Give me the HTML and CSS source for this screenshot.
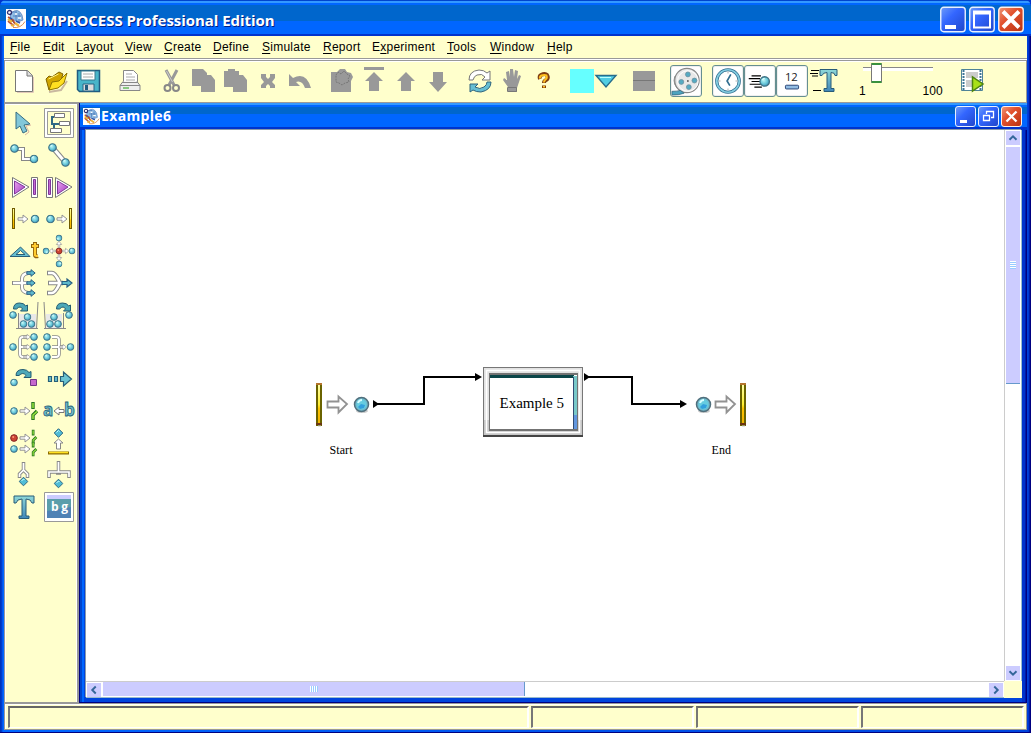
FILE: index.html
```html
<!DOCTYPE html>
<html lang="en">
<head>
<meta charset="utf-8">
<title>SIMPROCESS Professional Edition</title>
<link rel="stylesheet" href="styles.css">
</head>
<body>
<svg class="defs" width="0" height="0" aria-hidden="true">
  <defs>
    <radialGradient id="gBall" cx=".4" cy=".38" r=".65"><stop offset="0" stop-color="#b8f4f4"/><stop offset=".6" stop-color="#66c6d8"/><stop offset="1" stop-color="#3f8fb8"/></radialGradient>
    <linearGradient id="gTeal" x1="0" y1="0" x2="0" y2="1"><stop offset="0" stop-color="#8ed8d8"/><stop offset="1" stop-color="#3f86b8"/></linearGradient>
    <linearGradient id="gGold" x1="0" y1="0" x2="0" y2="1"><stop offset="0" stop-color="#ffffb0"/><stop offset=".5" stop-color="#ffee33"/><stop offset=".6" stop-color="#ffc400"/><stop offset="1" stop-color="#eeb000"/></linearGradient>
    <linearGradient id="gPurple" x1="0" y1="0" x2="1" y2="1"><stop offset="0" stop-color="#e9a0f0"/><stop offset="1" stop-color="#a23cc0"/></linearGradient>
    <linearGradient id="gBlueBtn" x1="0" y1="0" x2="1" y2="1"><stop offset="0" stop-color="#6f9cf8"/><stop offset=".4" stop-color="#3366ff"/><stop offset="1" stop-color="#1f45c8"/></linearGradient>
    <linearGradient id="gRedBtn" x1="0" y1="0" x2="1" y2="1"><stop offset="0" stop-color="#f09878"/><stop offset=".4" stop-color="#e2522e"/><stop offset="1" stop-color="#b83010"/></linearGradient>
    <symbol id="ball" viewBox="0 0 10 10"><circle cx="5" cy="5" r="4.200" fill="url(#gBall)" stroke="#3f7486" stroke-width="1.200"/><path d="M3 4q0-1.500 2-1.500" fill="none" stroke="#e0ffff"/></symbol>
    <symbol id="bigball" viewBox="0 0 17 17"><circle cx="8.500" cy="8.500" r="7" fill="#6fb9cc" stroke="#506f7c" stroke-width="1.500"/><circle cx="8.500" cy="8.500" r="5" fill="#66cce0"/><path d="M8 8l4 1-1 3-4 1-2-2z" fill="#33a0dd"/><path d="M5 7q1-3 4-3" fill="none" stroke="#d8ffff" stroke-width="2"/></symbol>
    <symbol id="redball" viewBox="0 0 10 10"><circle cx="5" cy="5" r="4.200" fill="#cc4433" stroke="#802020" stroke-width="1.200"/><circle cx="4" cy="3.700" r="1.200" fill="#ff9977"/></symbol>
    <symbol id="arrow" viewBox="0 0 12 10"><path d="M1 3.800h5V1l5 4-5 4V6.200H1z" fill="#fff" stroke="#929292" stroke-width="1"/></symbol>
    <symbol id="bluearrow" viewBox="0 0 12 10"><path d="M1 3.500h5V1l5 4-5 4V6.500H1z" fill="#5eb9cc" stroke="#285f82" stroke-width="1.200"/></symbol>
    <symbol id="diamond" viewBox="0 0 10 10"><path d="M5 .7 9.300 5 5 9.300.7 5z" fill="#50bdd7" stroke="#2c6580"/><path d="M3 4.500 5 2.500l1 1" stroke="#c8ffff" fill="none"/></symbol>
    <symbol id="gate" viewBox="0 0 8 20"><path d="M2 1v7M2 19v-5l4-4" stroke="#267520" stroke-width="3.400" fill="none"/><path d="M2 2v5M2 18v-4l4-3.500" stroke="#9ce83c" stroke-width="1.400" fill="none"/></symbol>
    <symbol id="logo" viewBox="0 0 20 20"><path d="M0 0h20v20H0z" fill="#fff"/><path d="M5 4q7-6 11 2l1 5-5 2-8-4z" fill="#8fbde6" stroke="#4d77b5" stroke-width=".7"/><circle cx="3.500" cy="3.500" r="2" fill="none" stroke="#303070" stroke-width="1.300"/><path d="M6 3h5M7 7h8M10 3v8M13 4v8" stroke="#4d77b5" stroke-width=".8"/><path d="M9 5h2M12 9h3" stroke="#fff" stroke-width="1.500"/><path d="M2 8l5 3 2 4M2 12l6 5" stroke="#bb4d33" stroke-width="1.700"/><path d="M2 10l4 3M9 14l4 3M5 16l3 1" stroke="#eeb43c" stroke-width="2.200"/><path d="M4 9l2 1M10 12l4 2" stroke="#3355a5" stroke-width="1.500"/><path d="M7 18.500q8 1 12-6" stroke="#dd9055" fill="none"/></symbol>
    <symbol id="wmin" viewBox="0 0 26 26"><rect x=".75" y=".75" width="24.500" height="24.500" rx="3" fill="url(#gBlueBtn)" stroke="#e8f0ff" stroke-width="1.400"/><path d="M5 18.500h11v4H5z" fill="#fff"/></symbol>
    <symbol id="wmax" viewBox="0 0 26 26"><rect x=".75" y=".75" width="24.500" height="24.500" rx="3" fill="url(#gBlueBtn)" stroke="#e8f0ff" stroke-width="1.400"/><path d="M4 4h18v18H4zm2 4v12h14V8z" fill="#fff" fill-rule="evenodd"/></symbol>
    <symbol id="wclose" viewBox="0 0 26 26"><rect x=".75" y=".75" width="24.500" height="24.500" rx="3" fill="url(#gRedBtn)" stroke="#fff0e8" stroke-width="1.400"/><path d="M5 5l16 16M21 5 5 21" stroke="#fff" stroke-width="4"/></symbol>
    <symbol id="smin" viewBox="0 0 21 21"><rect x=".5" y=".5" width="20" height="20" rx="2.500" fill="url(#gBlueBtn)" stroke="#e8f0ff"/><path d="M5 14h7v3H5z" fill="#fff"/></symbol>
    <symbol id="srest" viewBox="0 0 21 21"><rect x=".5" y=".5" width="20" height="20" rx="2.500" fill="url(#gBlueBtn)" stroke="#e8f0ff"/><path d="M8.500 8V5.500h7v6H13M8 5.500h8M5.500 9.500h6v5h-6zM5 9.500h7" fill="none" stroke="#fff" stroke-width="1.300"/></symbol>
    <symbol id="sclose" viewBox="0 0 21 21"><rect x=".5" y=".5" width="20" height="20" rx="2.500" fill="url(#gRedBtn)" stroke="#fff0e8"/><path d="M5.500 5.500l10 10M15.500 5.500l-10 10" stroke="#fff" stroke-width="2.300"/></symbol>
  </defs>
</svg>

<div class="app">
  <header class="titlebar">
    <svg class="logo"><use href="#logo"/></svg>
    <h1 class="title">SIMPROCESS Professional Edition</h1>
    <div class="winbtns"><svg><use href="#wmin"/></svg><svg><use href="#wmax"/></svg><svg><use href="#wclose"/></svg></div>
  </header>

  <nav class="menu">
    <span><u>F</u>ile</span><span><u>E</u>dit</span><span><u>L</u>ayout</span><span><u>V</u>iew</span><span><u>C</u>reate</span><span><u>D</u>efine</span><span><u>S</u>imulate</span><span><u>R</u>eport</span><span>E<u>x</u>periment</span><span><u>T</u>ools</span><span><u>W</u>indow</span><span><u>H</u>elp</span>
  </nav>

  <div class="toolbar">
    <div class="group">
      <svg viewBox="0 0 32 32"><path d="M7.500 5.500h12l5 5v16h-17z" fill="#fff" stroke="#777"/><path d="M19 5.500v5.500h5.500" fill="#ddd" stroke="#777"/><path d="M9 27.500h16.500V12" fill="none" stroke="#e2c8b8"/></svg>
      <svg viewBox="0 0 32 32"><path d="M9 27l12-2 6-9" stroke="#c9b8a0" stroke-width="2" fill="none"/><path d="M6 14l3-3 3 1 7-5 4 2-4 12-10 4z" fill="#d0a400" stroke="#806400"/><path d="M9 25l3-8 7-1 8-8-3 10-6 5z" fill="#ffdf20" stroke="#907400"/><path d="M8.500 14l10-5" stroke="#fff17c"/></svg>
      <svg viewBox="0 0 32 32"><path d="M5.500 5.500h22v21h-20l-2-2z" fill="#48b5c9" stroke="#205b80" stroke-width="1.500"/><path d="M9 6h14v9H9z" fill="#fff" stroke="#397b8f"/><path d="M11 9h10M11 12h10" stroke="#aaa"/><path d="M11 19h11v7H11z" fill="#ddd" stroke="#286484"/><path d="M13 20h3v5h-3z" fill="#225c80"/></svg>
    </div>
    <div class="group">
      <svg viewBox="0 0 32 32"><path d="M9.500 17V5.500h10l4 4V17" fill="#fff" stroke="#888"/><path d="M12 9h6M12 12h9M12 15h9" stroke="#aaa"/><path d="M9 16.500l-3 4v5h20v-5l-3-4" fill="#eee" stroke="#888"/><path d="M8 17.500h16M6 20.500h20" stroke="#888"/><path d="M9 23h6" stroke="#66bb5c" stroke-width="1.500"/></svg>
    </div>
    <div class="group gray">
      <svg viewBox="0 0 32 32"><path d="M10 5l8 15M21 5l-8 15" stroke="#999" stroke-width="3"/><circle cx="11.500" cy="23" r="3" fill="none" stroke="#888" stroke-width="2"/><circle cx="20" cy="23" r="3" fill="none" stroke="#888" stroke-width="2"/><path d="M10.500 6l6 11" stroke="#ccc"/></svg>
      <svg viewBox="0 0 32 32"><path d="M4 4h11l4 4v2h4l4 5v12H13v-6H4z"/></svg>
      <svg viewBox="0 0 32 32"><path d="M4 6h4V4h7v2h4v4h4l4 5v12H13v-5H4z"/></svg>
      <svg viewBox="0 0 32 32"><path d="M9 9h5v3l2 2 2-2V9h5v4l-3 4 3 3v3h-5v-2l-2-2-2 2v2H9v-3l3-3-3-4z"/></svg>
      <svg viewBox="0 0 32 32"><path d="M5 9l4 4q13-7 18 10h-6q-3-8-9-6l4 4H5z"/></svg>
    </div>
    <div class="group gray">
      <svg viewBox="0 0 32 32"><path d="M5 7h6l3-3h5l2 3 4 1 2 4-2 4v11H5z"/><path d="M10 10l2-3 3 2 3-3 3 3 3 2-2 3 1 3-4 1-3 2-3-2-3-1z" fill="none" stroke="#777" stroke-dasharray="2 1"/></svg>
      <svg viewBox="0 0 32 32"><path d="M6 2h20v3H6zM16 7l9 9h-4v10H11V16H7z"/></svg>
      <svg viewBox="0 0 32 32"><path d="M16 7l9 9h-4v10H11V16H7z"/></svg>
      <svg viewBox="0 0 32 32"><path d="M11 7h10v10h4l-9 10-9-10h4z"/></svg>
    </div>
    <div class="group">
      <svg viewBox="0 0 32 32"><path d="M5 15q0-9 10-10 5 0 8 3l3-2v9h-8l3-3q-3-4-8-2-3 1-4 5z" fill="#fff" stroke="#777"/><path d="M27 17q0 8-10 10-5 0-8-2l-3 2v-8h8l-3 3q5 3 9 0 3-2 3-5z" fill="#65bed3" stroke="#30657d"/></svg>
      <svg viewBox="0 0 32 32"><g class="gray"><path d="M12 22l-5-7 1-2 3 2-1-8 3-1 1 6V4h3l1 8 1-7 3 1-1 8 2-4 2 1-4 12v4h-9z"/></g><path d="M11.500 22.500h9v4h-9z" fill="none" stroke="#777"/></svg>
      <svg viewBox="0 0 32 32"><path d="M12 14q-1-3 1-4 4-2 6 0 2 3-1 5-2 1-2 3m0 2.500V23" fill="none" stroke="#7e3d12" stroke-width="4"/><path d="M12 13.500q-.5-2 1.500-3 3-1 5 0 1 2.500-1 4-1.500 1-1.500 3m0 3.500v1.500" fill="none" stroke="#ffc020" stroke-width="2"/></svg>
    </div>
    <div class="group picker"><i class="swatch"></i><svg viewBox="0 0 24 32"><path d="M2 10.500h20L12 22z" fill="#50cde3" stroke="#286c8b" stroke-width="1.400"/><path d="M6 12.500h11" stroke="#baffff"/></svg></div>
    <div class="group"><svg viewBox="0 0 32 32"><path d="M5 6h22v20H5z" fill="#999"/><path d="M5 15.500h22" stroke="#777"/></svg></div>
    <div class="group">
      <svg viewBox="0 0 32 32" class="framed"><circle cx="17" cy="15.500" r="13" fill="#e8e8e8" stroke="#888" stroke-width="1.300"/><circle cx="18" cy="16" r="11" fill="none" stroke="#fff"/><path d="M4 11Q1 20 10 27" fill="none" stroke="#888"/><path d="M1 27q6 0 9-1l4 3q-5 2-13 2z" fill="#4da4c0" stroke="#35677e" stroke-width=".8"/><g fill="#55aac2" stroke="#6a8c9c" stroke-width=".8"><circle cx="18" cy="9" r="2.600"/><circle cx="25" cy="15.500" r="2.600"/><circle cx="19" cy="22.500" r="2.600"/><circle cx="11" cy="17" r="2.600"/></g><circle cx="18" cy="16" r="1" fill="#555"/></svg>
    </div>
    <div class="group">
      <svg viewBox="0 0 32 32" class="framed"><circle cx="16" cy="16" r="12" fill="#fff" stroke="#316e90" stroke-width="3.400"/><circle cx="16" cy="16" r="12" fill="none" stroke="#83cce0" stroke-width="1.800"/><path d="M19 9l-4 7 3 5" fill="none" stroke="#316e90" stroke-width="1.800"/><path d="M16 6v2M16 24v2M6 16h2M24 16h2" stroke="#aaa"/></svg>
      <svg viewBox="0 0 32 32" class="framed"><path d="M7 10.500h10M4 13.500h12M7 16.500h9M5 19.500h12M10 22.500h8" stroke="#000" stroke-width="1.200"/><use href="#ball" x="15" y="10.500" width="12" height="12"/></svg>
      <svg viewBox="0 0 32 32" class="framed"><text x="8.500" y="16" class="twelve" textLength="13.500">12</text><rect x="9" y="20.500" width="14" height="4" rx="1" fill="#91bce3" stroke="#233f72"/></svg>
      <svg viewBox="0 0 32 32"><path d="M3 5.500h8M2 8.500h8M4 11h6M5 25.500h8" stroke="#000" stroke-width="1.200"/><path d="M12 4.500h17v6h-2q0-3-4-3v16h3v3H16v-3h3v-16q-4 0-5 3h-2z" fill="url(#gTeal)" stroke="#285c78"/></svg>
    </div>
    <div class="slider"><div class="track"><i class="thumb"></i></div><div class="labels"><span>1</span><span>100</span></div></div>
    <svg viewBox="0 0 32 32" class="run"><path d="M5.500 4.500h21v21h-21z" fill="#fff" stroke="#4f8398"/><path d="M7.500 5v20M24.500 5v20" stroke="#3f7795" stroke-width="2" stroke-dasharray="2 1"/><path d="M10 7h12v6H10zM10 15h12v7H10z" fill="#ccc"/><path d="M16.500 12v14l10.500-7z" fill="#a8e018" stroke="#4e8310" stroke-width="1.500"/></svg>
  </div>

  <main class="body">
    <aside class="palette">
      <svg viewBox="0 0 32 32"><path d="M8 5l14 12-6 1 3 6-4 2-3-7-4 3z" fill="#82c7d9" stroke="#356c82"/><path d="M23 18l-5 1 3 6-4 3" fill="none" stroke="#dbb5a0"/></svg>
      <svg viewBox="0 0 32 32"><path d="M1.500 1.500h29v29h-29z" fill="#fff" stroke="#999"/><path d="M4.500 4.500h23v23h-23z" fill="#ffffcc" stroke="#999"/><path d="M11 10H9v7h8M11 16v6" fill="none" stroke="#306884" stroke-width="2"/><g fill="#fff" stroke="#777"><path d="M11.500 6.500h10v4h-10zM16.500 14.500h10v4h-10zM7.500 21.500h11v4h-11z"/></g></svg>
      <svg viewBox="0 0 32 32"><path d="M6 10h9v10h12" fill="none" stroke="#888" stroke-width="4"/><path d="M6 10h9v10h12" fill="none" stroke="#fff" stroke-width="2"/><use href="#ball" x="2" y="5" width="9" height="9"/><use href="#ball" x="21.500" y="15.500" width="9" height="9"/></svg>
      <svg viewBox="0 0 32 32"><path d="M10 9l12 14" stroke="#888" stroke-width="5"/><path d="M10 9l12 14" stroke="#fff" stroke-width="3"/><use href="#ball" x="5" y="4" width="9" height="9"/><use href="#ball" x="18" y="19" width="9" height="9"/></svg>
      <svg viewBox="0 0 32 32"><path d="M4.500 6.500v20L21 16z" fill="#fff" stroke="#777"/><path d="M6.500 10v13L17 16z" fill="url(#gPurple)" stroke="#81359a"/><path d="M23.500 6.500h6v20h-6z" fill="#fff" stroke="#777"/><path d="M25.500 8.500h2v15h-2z" fill="#c36ad2" stroke="#81359a"/></svg>
      <svg viewBox="0 0 32 32"><path d="M3.500 6.500h6v20h-6z" fill="#fff" stroke="#777"/><path d="M5.500 8.500h2v15h-2z" fill="#c36ad2" stroke="#81359a"/><path d="M12.500 6.500v20L29 16z" fill="#fff" stroke="#777"/><path d="M14.500 10v13L25 16z" fill="url(#gPurple)" stroke="#81359a"/></svg>
      <svg viewBox="0 0 32 32"><rect x="4.500" y="5.500" width="2" height="20" fill="url(#gGold)" stroke="#705b00"/><use href="#arrow" x="9" y="11" width="12" height="10"/><use href="#ball" x="22.500" y="11.500" width="9" height="9"/></svg>
      <svg viewBox="0 0 32 32"><use href="#ball" x="3" y="11.500" width="9" height="9"/><use href="#arrow" x="13" y="11" width="12" height="10"/><rect x="26.500" y="5.500" width="2" height="20" fill="url(#gGold)" stroke="#705b00"/></svg>
      <svg viewBox="0 0 32 32"><path d="M2 21.500h20L12.500 12zm6-2h9l-4.500-4z" fill="#66bed0" stroke="#285f79" fill-rule="evenodd"/><path d="M27 7v13q0 2 3 1M23 11h8" fill="none" stroke="#91620c" stroke-width="4"/><path d="M27 8v12q0 1 3 1M24 11h6" fill="none" stroke="#ffcb30" stroke-width="2.200"/></svg>
      <svg viewBox="0 0 32 32"><g id="spoke"><use href="#arrow" x="18.500" y="11" width="8" height="10"/><use href="#ball" x="25.500" y="12.500" width="7" height="7"/></g><use href="#spoke" transform="rotate(90 16 16)"/><use href="#spoke" transform="rotate(180 16 16)"/><use href="#spoke" transform="rotate(270 16 16)"/><use href="#redball" x="12.500" y="12.500" width="7" height="7"/></svg>
      <svg viewBox="0 0 32 32"><path d="M4 16h16M22 6h-2q-6 1-6 6v8q0 5 6 6h2" fill="none" stroke="#888" stroke-width="4"/><path d="M5 16h15M22 6h-2q-6 1-6 6v8q0 5 6 6h2" fill="none" stroke="#fff" stroke-width="2.300"/><use href="#bluearrow" x="18" y="1.500" width="10" height="9"/><use href="#bluearrow" x="18" y="11.500" width="10" height="9"/><use href="#bluearrow" x="18" y="21.500" width="10" height="9"/></svg>
      <svg viewBox="0 0 32 32"><path d="M4 6h5q3 0 7 8v4q-4 8-7 8H4M5 16h15" fill="none" stroke="#888" stroke-width="4.500"/><path d="M5 6h4q3 0 7 8v4q-4 8-7 8H5M6 16h14" fill="none" stroke="#fff" stroke-width="2.700"/><use href="#bluearrow" x="18" y="10.500" width="12" height="11"/></svg>
      <svg viewBox="0 0 32 32"><use href="#ball" x="1" y="12" width="8" height="8"/><path d="M5.500 10q0-6 6-6 5 0 6 3l2-1v6h-7l2-2q-2-4-6 0z" fill="#4da8b8" stroke="#245c72"/><path d="M11 15h17v14H11z" fill="#e8e8e8"/><path d="M10.500 14v15.500h18L30 3M8 29.500h22" fill="none" stroke="#888"/><use href="#ball" x="15.500" y="14" width="8" height="8"/><use href="#ball" x="11.500" y="21" width="8" height="8"/><use href="#ball" x="19.500" y="21" width="8" height="8"/></svg>
      <svg viewBox="0 0 32 32"><use href="#ball" x="22" y="12" width="8" height="8"/><path d="M13.500 10q0-6 6-6 5 0 6 3l2-1v6h-7l2-2q-2-4-6 0z" fill="#4da8b8" stroke="#245c72"/><path d="M3 15h16v14H3z" fill="#e8e8e8"/><path d="M1 3l1.500 26.500h18V14M1 29.500h22" fill="none" stroke="#888"/><use href="#ball" x="7" y="14" width="8" height="8"/><use href="#ball" x="3" y="21" width="8" height="8"/><use href="#ball" x="11" y="21" width="8" height="8"/></svg>
      <svg viewBox="0 0 32 32"><path d="M20 6h-5q-3 0-3 3v14q0 3 3 3h5M11 16h9" fill="none" stroke="#888" stroke-width="3.500"/><path d="M20 6h-5q-3 0-3 3v14q0 3 3 3h5M11 16h9" fill="none" stroke="#fff" stroke-width="2"/><use href="#arrow" x="15" y="2" width="8" height="8"/><use href="#arrow" x="15" y="12" width="8" height="8"/><use href="#arrow" x="15" y="22" width="8" height="8"/><use href="#ball" x="1" y="12" width="8" height="8"/><use href="#ball" x="22" y="2" width="8" height="8"/><use href="#ball" x="22" y="12" width="8" height="8"/><use href="#ball" x="22" y="22" width="8" height="8"/></svg>
      <svg viewBox="0 0 32 32"><path d="M9 6h4q3 0 3 3v14q0 3-3 3H9M9 16h11" fill="none" stroke="#888" stroke-width="3.500"/><path d="M9 6h4q3 0 3 3v14q0 3-3 3H9M9 16h11" fill="none" stroke="#fff" stroke-width="2"/><use href="#arrow" x="16" y="12" width="8" height="8"/><use href="#ball" x="0" y="2" width="8" height="8"/><use href="#ball" x="0" y="12" width="8" height="8"/><use href="#ball" x="0" y="22" width="8" height="8"/><use href="#ball" x="23.500" y="12" width="8" height="8"/></svg>
      <svg viewBox="0 0 32 32"><use href="#ball" x="2" y="15.500" width="8" height="8"/><path d="M8 12.500q0-6 7-6 4 0 6 3l2-1v6h-7l2-2q-3-4-7 0z" fill="#4da8b8" stroke="#245c72"/><path d="M22.500 16.500h6v6h-6z" fill="#c667ce" stroke="#713786"/></svg>
      <svg viewBox="0 0 32 32"><path d="M5.500 13.500h3v5h-3zM11.500 13.500h3v5h-3zM17.500 13.500h3V9l8 7-8 7v-4.500h-3z" fill="#6bc4d2" stroke="#285f79" stroke-width="1.200"/></svg>
      <svg viewBox="0 0 32 32"><use href="#ball" x="2" y="12" width="8" height="8"/><use href="#arrow" x="11" y="11" width="12" height="10"/><use href="#gate" x="23" y="6" width="8" height="20"/></svg>
      <svg viewBox="0 0 32 32"><text x="0" y="21" class="letters">a</text><text x="21" y="21" class="letters">b</text><path d="M21 14.500h-5V12l-5 4 5 4v-2.500h5z" fill="#fff" stroke="#777"/></svg>
      <svg viewBox="0 0 32 32"><use href="#redball" x="2" y="7" width="8" height="8"/><use href="#ball" x="2" y="18" width="8" height="8"/><use href="#arrow" x="11" y="6" width="12" height="10"/><use href="#arrow" x="11" y="17" width="12" height="10"/><use href="#gate" x="23" y="2" width="7.500" height="16"/><use href="#gate" x="23" y="14" width="7.500" height="16"/></svg>
      <svg viewBox="0 0 32 32"><use href="#diamond" x="10.500" y="1" width="10" height="10"/><path d="M13.500 22v-6H11l4.500-4 4.500 4h-2.500v6z" fill="#fff" stroke="#888"/><path d="M5 26h21" stroke="#8b6a00" stroke-width="3"/><path d="M6 25.500h19" stroke="#ffe020" stroke-width="1.500"/></svg>
      <svg viewBox="0 0 32 32"><path d="M15.500 3v8l-4 4v4M15.500 11l4 4v4" fill="none" stroke="#888" stroke-width="3.500"/><path d="M15.500 4v7l-4 4v3M15.500 11l4 4v3" fill="none" stroke="#fff" stroke-width="1.700"/><use href="#diamond" x="10.500" y="17.500" width="10" height="10"/></svg>
      <svg viewBox="0 0 32 32"><path d="M15.500 2v10M6 19v-6h20v6M13 14h5" fill="none" stroke="#888" stroke-width="3.500"/><path d="M15.500 3v10M6 18v-5h20v5" fill="none" stroke="#fff" stroke-width="1.700"/><use href="#diamond" x="10.500" y="19.500" width="10" height="10"/></svg>
      <svg viewBox="0 0 32 32"><path d="M6 5h20v7h-2q-1-4-6-4v17h3v2.500H11V25h3V8q-5 0-6 4H6z" fill="url(#gTeal)" stroke="#285c78"/></svg>
      <svg viewBox="0 0 32 32"><path d="M1.500 1.500h29v29h-29z" fill="#fff" stroke="#999"/><path d="M4 4h24v4H4z" fill="#ccccff"/><path d="M4 8h24v19H4z" fill="#4f82b5"/><path d="M4 8h24v8L4 20z" fill="#5a9eab"/><text x="8" y="20" class="bg" textLength="17">bg</text></svg>
    </aside>

    <section class="doc">
      <div class="doctitle">
        <svg class="logo"><use href="#logo"/></svg>
        <h2>Example6</h2>
        <div class="winbtns small"><svg><use href="#smin"/></svg><svg><use href="#srest"/></svg><svg><use href="#sclose"/></svg></div>
      </div>
      <div class="view">
        <svg class="canvas" viewBox="86 130 918 551">
          <g fill="none" stroke="#000" stroke-width="2"><path d="M376 404h48v-27h53M586 377h46v27h50"/></g>
          <path d="M373 400v8l6-4zM475 373v8l7-4zM584 373v8l6-4zM680 400v8l7-4z"/>
          <g id="bar"><rect x="317" y="384" width="4" height="41" fill="url(#gGold)" stroke="#6a6300" stroke-width="2"/><path d="M316 383h6v2h-6z" fill="#b5742d"/><path d="M316 423h6v2h-6z" fill="#6b3511"/><path d="M318 426h3" stroke="#ccc"/></g>
          <use href="#bar" x="424"/>
          <g id="bigarrow"><path d="M327.500 401.500h11v-5l8.500 7.500-8.500 8.500v-5h-11z" fill="#fff" stroke="#929292" stroke-width="1.800"/></g>
          <use href="#bigarrow" x="388"/>
          <ellipse cx="362" cy="411" rx="6" ry="2" fill="#ccc"/><ellipse cx="704" cy="411" rx="6" ry="2" fill="#ccc"/>
          <use href="#bigball" x="353" y="396" width="17" height="17"/><use href="#bigball" x="695" y="396" width="17" height="17"/>
          <path d="M483 367h100v70H483z" fill="#777"/><path d="M484 368h98v67H484z" fill="#e2e2e2"/><path d="M484 420h98v15h-98z" fill="#c7c7c7"/><path d="M486.500 370.500h93v62h-93z" fill="none" stroke="#fff" stroke-width="1.500"/><path d="M483 435h100v2H483z" fill="#444"/>
          <path d="M489 373h89v58h-89z" fill="#737373"/><path d="M490 375h87v54h-87z" fill="#fff"/><path d="M490 375h84v3h-84z" fill="#0b4548"/><path d="M573 376h4v39h-4z" fill="#79c9c9"/><path d="M573 415h4v14h-4z" fill="#6297df"/><path d="M573.500 377v52" stroke="#304c73"/>
          <text x="499.500" y="408" class="proc" textLength="64.500">Example 5</text>
          <text x="329.500" y="454" class="node" textLength="23">Start</text>
          <text x="711.500" y="454" class="node" textLength="19.500">End</text>
        </svg>
        <div class="vbar"><svg class="sb" viewBox="0 0 16 16"><path d="M4 10l4-4 4 4"/></svg><div class="vthumb"><i></i></div><svg class="sb end" viewBox="0 0 16 16"><path d="M4 6l4 4 4-4"/></svg></div>
        <div class="hbar"><svg class="sb" viewBox="0 0 16 16"><path d="M10 4L6 8l4 4"/></svg><div class="hthumb"><i></i></div><svg class="sb end" viewBox="0 0 16 16"><path d="M6 4l4 4-4 4"/></svg></div>
        <div class="corner"></div>
      </div>
    </section>
  </main>

  <footer class="status"><div></div><div></div><div></div><div></div></footer>
</div>
</body>
</html>
```
FILE: styles.css
```css
* { box-sizing: border-box; }
body { margin: 0; overflow: hidden; background: #0033cc; font-family: "Liberation Sans", Arial, sans-serif; }
.defs { display: block; position: absolute; }
svg { display: block; flex: none; }

.app {
  width: 1031px; height: 733px; padding: 0 4px 3px;
  display: flex; flex-direction: column;
  background: linear-gradient(90deg, #0033bb 0 1px, #0044dd 2px, #0066ff 3px 4px, #0044dd 1027px, #0033cc 1029px, #000080 1030px);
  box-shadow: inset 0 -1px #000080;
  border-radius: 6px 6px 0 0;
}
.titlebar {
  height: 36px; margin: 0 -4px; padding: 2px 7px 0 6px; flex: none;
  display: flex; align-items: center;
  background: linear-gradient(#0044cc 0 1px, #3399ff 1px 3px, #0066ff 3px 5px, #0066cc 5px 21px, #0066ff 21px 34px, #0033cc 34px);
  border-radius: 6px 6px 0 0;
}
.logo { width: 20px; height: 20px; }
.title {
  margin: 2px 0 0 4px; flex: 1; white-space: nowrap;
  font: bold 15px/20px "Open Sans", sans-serif; letter-spacing: -0.05px;
  color: #fff; text-shadow: 1px 1px #002080;
}
.winbtns { display: flex; gap: 3px; }
.winbtns svg { width: 26px; height: 27px; }
.winbtns.small { gap: 2px; }
.winbtns.small svg { width: 21px; height: 21px; }

.menu {
  height: 24px; flex: none; padding: 4px 0 0 6px;
  display: grid; grid-template-columns: 33px 33px 49px 39px 49px 49px 61px 49px 75px 43px 57px 60px;
  background: #ffffcc; border-bottom: 1px solid #fff; box-shadow: inset 0 -1px #999;
  font-size: 12px; line-height: 14px; letter-spacing: .25px; color: #000;
}
.menu u { text-underline-offset: 2px; }

.toolbar {
  height: 43px; flex: none; padding: 4px 0 0 3px;
  display: flex; align-items: flex-start; gap: 10px;
  background: #ffffcc; border: 1px solid #999; box-shadow: inset 1px 1px #fff, 0 1px #fff;
}
.group { display: flex; }
.group svg { width: 32px; height: 32px; }
.gray path { fill: #999; }
.gray path[fill="none"] { fill: none; }
.group .framed { background: #fff; border: 1px solid #668f91; border-radius: 3px; box-shadow: inset 0 0 0 1px #eee; }
.picker { width: 48px; }
.swatch { width: 24px; height: 24px; margin-top: 4px; background: #66ffff; }
.picker svg { width: 24px; }
.twelve { font: 12px "Open Sans", sans-serif; fill: #222; }
.slider { width: 84px; margin-left: 9px; font-size: 12px; }
.track {
  height: 18px; width: 70px; margin: 0 0 0 4px; padding: 0 0 0 8px;
  background: linear-gradient(#888, #888) 0 4px / 70px 1px no-repeat, linear-gradient(#fff, #fff) 0 5px / 70px 3px no-repeat;
}
.thumb { display: block; width: 11px; height: 20px; margin-top: -2px; background: #fff; border: 1px solid #777; border-top: 2px solid #39913d; border-bottom: 2px solid #39913d; border-radius: 1px; }
.labels { display: flex; justify-content: space-between; line-height: 14px; padding: 3px 0 0; letter-spacing: .2px; }
.run { width: 32px; height: 32px; margin-left: 3px; }

.body { flex: 1; min-height: 0; display: flex; }
.palette {
  width: 75px; padding: 3px 0 0 3px; flex: none;
  display: grid; grid-template-columns: 32px 32px; grid-auto-rows: 32px; column-gap: 3px; align-content: start;
  background: #ffffcc; border: 1px solid #999; border-right: 2px solid #999; box-shadow: inset 1px 1px #fff, inset -1px 0 #fff;
}
.palette svg { width: 32px; height: 32px; overflow: visible; }
.letters { font: bold 17px "Open Sans", sans-serif; fill: #6bbdcb; stroke: #285f79; stroke-width: .8px; }
.bg { font: bold 12px "Open Sans", sans-serif; fill: #fff; }

.doc {
  flex: 1; min-width: 0; padding: 0 5px 5px 7px;
  display: flex; flex-direction: column;
  background: linear-gradient(90deg, #000080 0 1px, #0044cc 1px 3px, #0066ff 3px 5px, #0044dd 5px 943px, #0033cc 943px 946px, #000080 947px);
  box-shadow: inset 0 -1px #000080;
}
.doctitle {
  height: 27px; flex: none; margin: 0 -5px 0 -6px; padding: 0 5px 1px 3px;
  display: flex; align-items: center;
  background: linear-gradient(#3399ff 0 2px, #0066ff 2px 4px, #0066cc 4px 11px, #0066ff 11px 24px, #0033cc 24px);
}
.doctitle .logo { width: 17px; height: 17px; }
.doctitle h2 { flex: 1; margin: 0 0 0 1px; font: bold 14px/20px "Open Sans", sans-serif; color: #fff; letter-spacing: .35px; }
.view {
  flex: 1; min-height: 0; display: grid;
  grid-template-columns: 1fr 18px; grid-template-rows: 1fr 17px;
  background: #fff; box-shadow: -1px -1px #8899aa;
}
.canvas { width: 100%; height: 100%; min-height: 0; }
.proc { font: 15px "Liberation Serif", serif; }
.node { font: 12px "Liberation Serif", serif; }
.vbar, .hbar { display: flex; background: #fff; }
.vbar { flex-direction: column; border-left: 1px solid #ccc; border-right: 1px solid #99bbcc; }
.hbar { border-top: 1px solid #ccc; border-bottom: 1px solid #99bbcc; }
.sb { width: 16px; height: 16px; padding: 1px; background: #ccccff; background-clip: content-box; fill: none; stroke: #336699; stroke-width: 2.2; }
.vbar .end { margin-top: auto; }
.hbar .end { margin-left: auto; }
.vthumb { width: 14px; height: 237px; margin: 1px; background: #ccccff; border-bottom: 1px solid #6699cc; display: flex; align-items: center; justify-content: center; }
.vthumb i { width: 6px; height: 8px; background: repeating-linear-gradient(#fff 0 1px, #99ccff 1px 2px); }
.hthumb { height: 14px; width: 422px; margin: 0 0 0 1px; background: #ccccff; border-right: 1px solid #6699cc; display: flex; align-items: center; justify-content: center; }
.hthumb i { width: 8px; height: 6px; background: repeating-linear-gradient(90deg, #fff 0 1px, #99ccff 1px 2px); }
.corner { background: #ffffcc; }

.status {
  height: 27px; flex: none; padding: 2px 3px 1px 3px;
  display: grid; grid-template-columns: 521px 163px 163px 163px; gap: 2px;
  background: #ffffcc; border: 1px solid #999;
  box-shadow: inset 0 1px #fff, inset 1px 0 #fff;
}
.status div { border: 2px solid #666; border-left-color: #777; border-right-color: #fff; border-bottom: 1px solid #fff; }
```
